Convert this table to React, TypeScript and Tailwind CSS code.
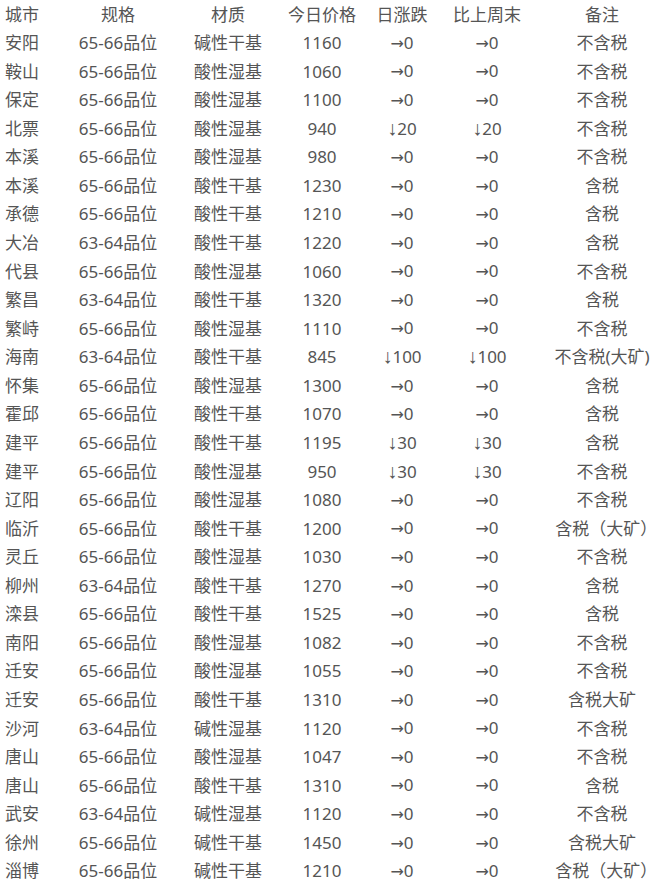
const rows: string[][] = [
  ["安阳", "65-66品位", "碱性干基", "1160", "→0", "→0", "不含税"],
  ["鞍山", "65-66品位", "酸性湿基", "1060", "→0", "→0", "不含税"],
  ["保定", "65-66品位", "酸性湿基", "1100", "→0", "→0", "不含税"],
  ["北票", "65-66品位", "酸性湿基", "940", "↓20", "↓20", "不含税"],
  ["本溪", "65-66品位", "酸性湿基", "980", "→0", "→0", "不含税"],
  ["本溪", "65-66品位", "酸性干基", "1230", "→0", "→0", "含税"],
  ["承德", "65-66品位", "酸性干基", "1210", "→0", "→0", "含税"],
  ["大冶", "63-64品位", "酸性干基", "1220", "→0", "→0", "含税"],
  ["代县", "65-66品位", "酸性湿基", "1060", "→0", "→0", "不含税"],
  ["繁昌", "63-64品位", "酸性干基", "1320", "→0", "→0", "含税"],
  ["繁峙", "65-66品位", "酸性湿基", "1110", "→0", "→0", "不含税"],
  ["海南", "63-64品位", "酸性干基", "845", "↓100", "↓100", "不含税(大矿)"],
  ["怀集", "65-66品位", "酸性湿基", "1300", "→0", "→0", "含税"],
  ["霍邱", "65-66品位", "酸性干基", "1070", "→0", "→0", "含税"],
  ["建平", "65-66品位", "酸性干基", "1195", "↓30", "↓30", "含税"],
  ["建平", "65-66品位", "酸性湿基", "950", "↓30", "↓30", "不含税"],
  ["辽阳", "65-66品位", "酸性湿基", "1080", "→0", "→0", "不含税"],
  ["临沂", "65-66品位", "酸性干基", "1200", "→0", "→0", "含税（大矿）"],
  ["灵丘", "65-66品位", "酸性湿基", "1030", "→0", "→0", "不含税"],
  ["柳州", "63-64品位", "酸性干基", "1270", "→0", "→0", "含税"],
  ["滦县", "65-66品位", "酸性干基", "1525", "→0", "→0", "含税"],
  ["南阳", "65-66品位", "酸性湿基", "1082", "→0", "→0", "不含税"],
  ["迁安", "65-66品位", "酸性湿基", "1055", "→0", "→0", "不含税"],
  ["迁安", "65-66品位", "酸性干基", "1310", "→0", "→0", "含税大矿"],
  ["沙河", "63-64品位", "碱性湿基", "1120", "→0", "→0", "不含税"],
  ["唐山", "65-66品位", "酸性湿基", "1047", "→0", "→0", "不含税"],
  ["唐山", "65-66品位", "酸性干基", "1310", "→0", "→0", "含税"],
  ["武安", "63-64品位", "碱性湿基", "1120", "→0", "→0", "不含税"],
  ["徐州", "65-66品位", "碱性干基", "1450", "→0", "→0", "含税大矿"],
  ["淄博", "65-66品位", "碱性干基", "1210", "→0", "→0", "含税（大矿）"],
];

const header = ["城市", "规格", "材质", "今日价格", "日涨跌", "比上周末", "备注"];

// the arrows in the original are a thin long → and a narrow ↓
function Change({ text }: { text: string }) {
  const arrow = text.charAt(0);
  if (arrow === "→") {
    return (
      <>
        <span className="font-['DejaVu_Sans',sans-serif] text-[16px]">{arrow}</span>
        {text.slice(1)}
      </>
    );
  }
  if (arrow === "↓") {
    return (
      <>
        <span className="font-['Liberation_Sans',sans-serif] text-[20px] leading-none">{arrow}</span>
        {text.slice(1)}
      </>
    );
  }
  return <>{text}</>;
}

function Note({ text }: { text: string }) {
  if (!text.endsWith("）")) return <>{text}</>;
  return (
    <>
      {text.slice(0, -1)}
      <span className="[font-feature-settings:'halt']">）</span>
    </>
  );
}

function Row({ cells, head }: { cells: string[]; head?: boolean }) {
  return (
    <div className="grid grid-cols-[63px_110px_110px_78px_82px_88px_1fr] h-[28.57px] items-center whitespace-nowrap">
      <div className="pl-[5px]">{cells[0]}</div>
      <div className="text-center">{cells[1]}</div>
      <div className="text-center">{cells[2]}</div>
      <div className="text-center">{cells[3]}</div>
      <div className="text-center">{head ? cells[4] : <Change text={cells[4]} />}</div>
      <div className="text-center">{head ? cells[5] : <Change text={cells[5]} />}</div>
      <div className="text-center pl-[23px]">{head ? cells[6] : <Note text={cells[6]} />}</div>
    </div>
  );
}

export default function App() {
  return (
    <div className="w-[650px] h-[881px] bg-white overflow-hidden text-[#555] text-[17px] font-['Noto_Sans','Noto_Sans_CJK_SC',sans-serif]">
      <Row cells={header} head />
      {rows.map((r, i) => (
        <Row key={i} cells={r} />
      ))}
    </div>
  );
}
